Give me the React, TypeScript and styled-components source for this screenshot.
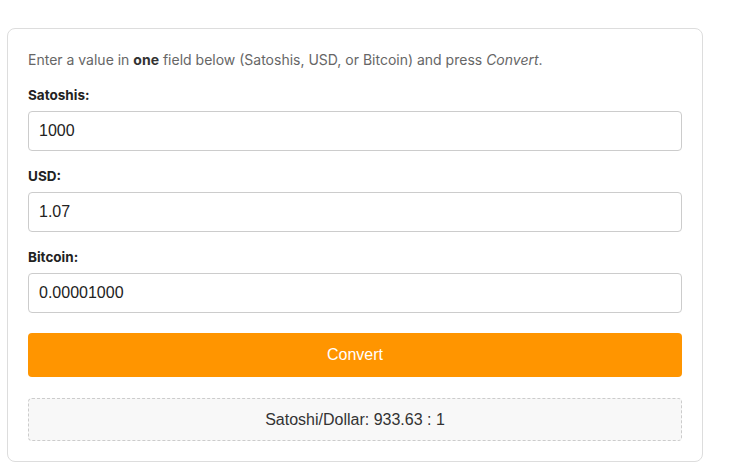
import styled, { createGlobalStyle } from "styled-components"

const GlobalStyle = createGlobalStyle`
  body {
    margin: 0;
    background: #ffffff;
    font-family: Inter, "Liberation Sans", sans-serif;
  }
`;

const Page = styled.div`
  padding: 28px 26px 15px 7px;
`;

const Card = styled.div`
  width: 696px;
  box-sizing: border-box;
  border: 1px solid #dddddd;
  border-radius: 8px;
  padding: 20px;
  display: flex;
  flex-direction: column;
`;

const Intro = styled.p`
  margin: 1px 0 16px 0;
  font-size: 14px;
  line-height: 20px;
  color: #666666;

  strong {
    color: #333333;
    font-weight: 700;
  }
`;

const Field = styled.div`
  display: flex;
  flex-direction: column;
  margin-bottom: 16px;
`;

const Label = styled.label`
  font-size: 13.5px;
  font-weight: 700;
  color: #222222;
  line-height: 18px;
  margin-bottom: 7px;
`;

const Input = styled.input`
  height: 40px;
  box-sizing: border-box;
  border: 1px solid #cccccc;
  border-radius: 4px;
  padding: 0 10px;
  font-family: "Liberation Sans", Arial, sans-serif;
  font-size: 16px;
  color: #222222;
  outline: none;
`;

const Button = styled.button`
  height: 44px;
  margin-top: 4px;
  border: none;
  border-radius: 4px;
  background: #ff9500;
  color: #ffffff;
  font-family: "Liberation Sans", Arial, sans-serif;
  font-size: 16px;
  cursor: pointer;
`;

const Result = styled.div`
  margin-top: 21px;
  height: 43px;
  box-sizing: border-box;
  border: 1px dashed #cccccc;
  border-radius: 4px;
  background: #f8f8f8;
  display: flex;
  align-items: center;
  justify-content: center;
  font-family: "Liberation Sans", Arial, sans-serif;
  font-size: 16px;
  color: #333333;
`;

type FieldProps = {
  label: string;
  value: string;
}

function ConvertField({ label, value }: FieldProps) {
  return (
    <Field>
      <Label>{label}</Label>
      <Input type="text" defaultValue={value} />
    </Field>
  )
}

export default function App() {
  return (
    <>
      <GlobalStyle />
      <Page>
        <Card>
          <Intro>
            Enter a value in <strong>one</strong> field below (Satoshis, USD, or Bitcoin) and press <em>Convert</em>.
          </Intro>
          <ConvertField label="Satoshis:" value="1000" />
          <ConvertField label="USD:" value="1.07" />
          <ConvertField label="Bitcoin:" value="0.00001000" />
          <Button>Convert</Button>
          <Result>Satoshi/Dollar: 933.63 : 1</Result>
        </Card>
      </Page>
    </>
  )
}
